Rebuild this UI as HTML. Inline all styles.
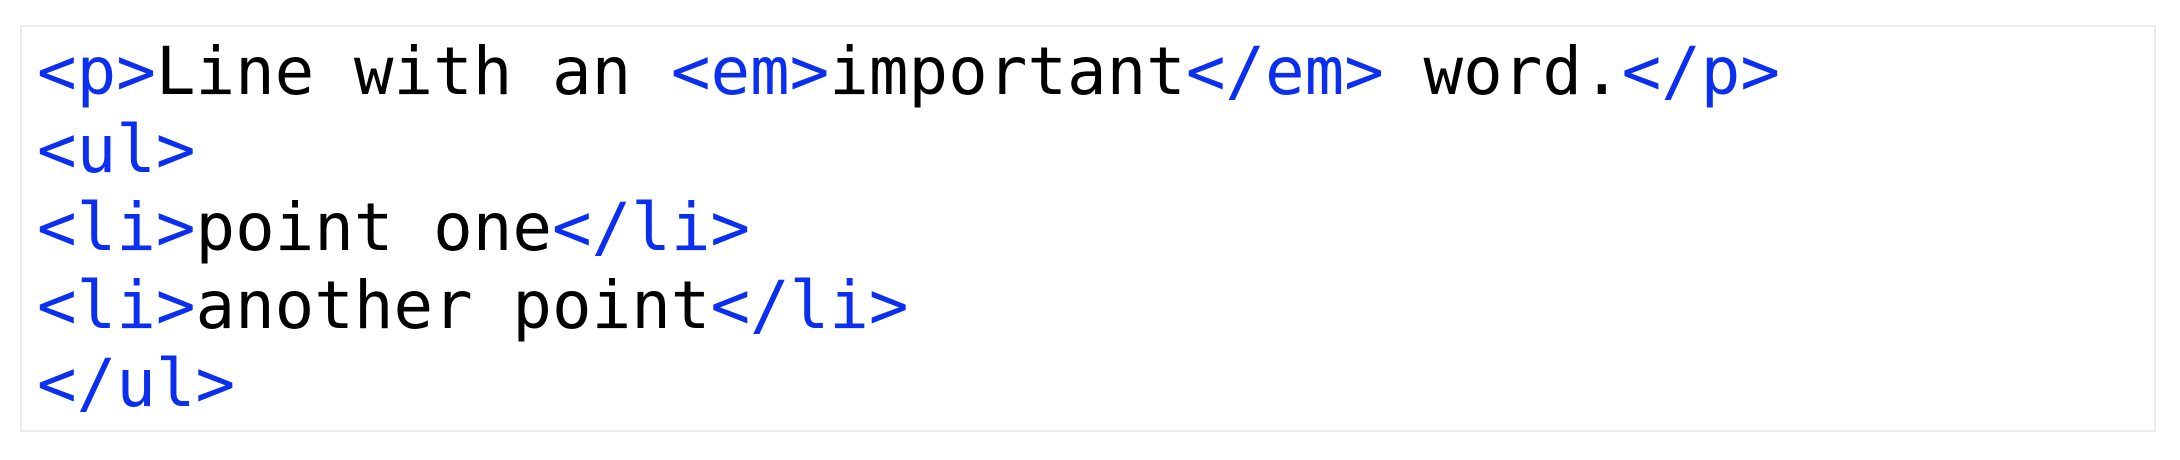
<!DOCTYPE html>
<html><head><meta charset="utf-8"><style>
html,body{margin:0;padding:0;background:#fff;width:2180px;height:460px;overflow:hidden}
.box{position:absolute;left:20px;top:25px;width:2136px;height:407px;border:2px solid #ececec;box-sizing:border-box;background:#fff}
pre{margin:0;position:absolute;left:15px;top:6px;font-family:"DejaVu Sans Mono",monospace;font-size:65.8px;line-height:78px;color:#000}
.t{color:#0a2ff0}
</style></head><body>
<div class="box"><pre><span class="t">&lt;p&gt;</span>Line with an <span class="t">&lt;em&gt;</span>important<span class="t">&lt;/em&gt;</span> word.<span class="t">&lt;/p&gt;</span>
<span class="t">&lt;ul&gt;</span>
<span class="t">&lt;li&gt;</span>point one<span class="t">&lt;/li&gt;</span>
<span class="t">&lt;li&gt;</span>another point<span class="t">&lt;/li&gt;</span>
<span class="t">&lt;/ul&gt;</span></pre></div>
</body></html>
